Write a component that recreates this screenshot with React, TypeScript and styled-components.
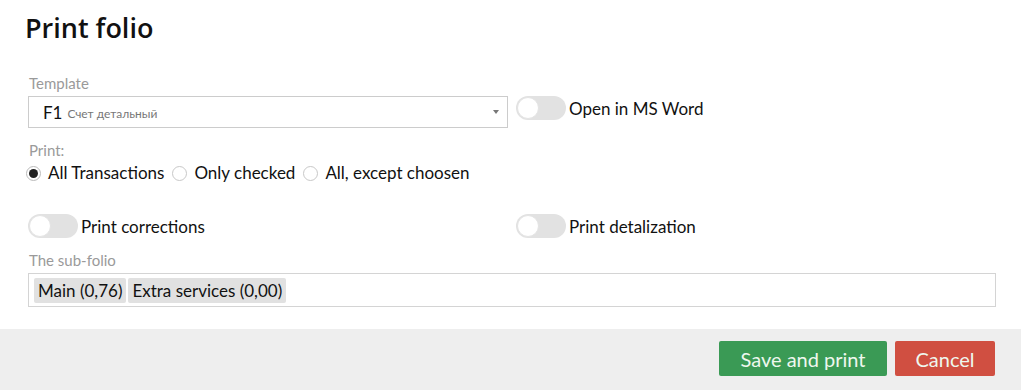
import React from "react";
import styled, { createGlobalStyle } from "styled-components";

const Global = createGlobalStyle`
  html, body { margin: 0; padding: 0; background: #fff; }
  body { font-family: "Lato", "Liberation Sans", sans-serif; color: #222; }
  * { box-sizing: border-box; }
`;

const Dialog = styled.div`
  width: 1021px;
  height: 390px;
  display: flex;
  flex-direction: column;
  background: #fff;
`;

const Body = styled.div`
  flex: 1;
  padding: 11px 25px 0 28px;
`;

const Title = styled.h1`
  margin: 0 0 0 -3px;
  font-family: "Open Sans", sans-serif;
  font-weight: 600;
  font-size: 27px;
  line-height: 34px;
  color: #111;
`;

const Grid = styled.div<{ $mt: number }>`
  display: grid;
  grid-template-columns: 480px 1fr;
  column-gap: 8px;
  margin-top: ${(p) => p.$mt}px;
`;

const Label = styled.div<{ $mt?: number }>`
  font-size: 15px;
  line-height: 18px;
  color: #9a9a9a;
  margin-top: ${(p) => p.$mt ?? 0}px;
  margin-bottom: 4px;
  padding-left: 1px;
`;

const Select = styled.div`
  height: 32px;
  border: 1px solid #ccc;
  display: flex;
  align-items: center;
  padding: 0 8px 0 14px;
  gap: 5px;
`;

const SelectCode = styled.span`
  font-size: 17px;
  color: #111;
`;

const SelectName = styled.span`
  flex: 1;
  font-size: 12px;
  color: #777;
  padding-top: 2px;
`;

const Caret = styled.span`
  width: 0;
  height: 0;
  border-left: 3.5px solid transparent;
  border-right: 3.5px solid transparent;
  border-top: 4px solid #777;
`;

const SwitchRow = styled.label<{ $pt?: number }>`
  display: flex;
  align-items: center;
  gap: 3px;
  font-size: 17px;
  line-height: 20px;
  color: #111;
  padding-top: ${(p) => p.$pt ?? 0}px;
  height: fit-content;
`;

const SwitchText = styled.span`
  padding-top: 2px;
`;

const Track = styled.span`
  width: 50px;
  height: 24px;
  border-radius: 12px;
  background: #e2e2e2;
  display: flex;
  align-items: center;
  padding: 1px;
`;

const Knob = styled.span`
  width: 22px;
  height: 22px;
  border-radius: 50%;
  background: #fff;
  border: 1px solid #e4e4e4;
`;

const RadioGroup = styled.div`
  display: flex;
  align-items: center;
  gap: 8px;
  margin-left: -2px;
  font-size: 17px;
  line-height: 20px;
  color: #111;
`;

const RadioItem = styled.label`
  display: flex;
  align-items: center;
  gap: 7px;
`;

const RadioCircle = styled.span<{ $checked?: boolean }>`
  width: 15px;
  height: 15px;
  border-radius: 50%;
  border: 1px solid ${(p) => (p.$checked ? "#bbb" : "#c8c8c8")};
  background: #fff;
  display: flex;
  align-items: center;
  justify-content: center;
  &::after {
    content: "";
    width: 9px;
    height: 9px;
    border-radius: 50%;
    background: ${(p) => (p.$checked ? "#222" : "transparent")};
  }
`;

const TagBox = styled.div`
  height: 34px;
  border: 1px solid #d4d4d4;
  display: flex;
  align-items: center;
  gap: 2px;
  padding: 0 5px;
`;

const Tag = styled.span`
  height: 25px;
  display: flex;
  align-items: center;
  padding: 0 4px;
  background: #e1e1e1;
  border-radius: 2px;
  font-size: 17px;
  color: #111;
`;

const Footer = styled.div`
  height: 61px;
  background: #eeeeee;
  display: flex;
  justify-content: flex-end;
  align-items: flex-start;
  gap: 8px;
  padding: 12px 26px 0 0;
`;

const Button = styled.button<{ $tone: "green" | "red" }>`
  height: 35px;
  border: none;
  border-radius: 2px;
  font-family: "Lato", sans-serif;
  font-size: 20px;
  color: #eef7ee;
  padding: 0 20px;
  min-width: ${(p) => (p.$tone === "green" ? 168 : 100)}px;
  background: ${(p) => (p.$tone === "green" ? "#3a9a55" : "#d04f41")};
  cursor: pointer;
`;

const Switch = ({ label, pt }: { label: string; pt?: number }) => (
  <SwitchRow $pt={pt}>
    <Track>
      <Knob />
    </Track>
    <SwitchText>{label}</SwitchText>
  </SwitchRow>
);

export default function App() {
  return (
    <>
      <Global />
      <Dialog>
        <Body>
          <Title>Print folio</Title>
          <Grid $mt={29}>
            <div>
              <Label>Template</Label>
              <Select>
                <SelectCode>F1</SelectCode>
                <SelectName>Счет детальный</SelectName>
                <Caret />
              </Select>
            </div>
            <Switch label="Open in MS Word" pt={22} />
          </Grid>
          <Label $mt={13}>Print:</Label>
          <RadioGroup>
            <RadioItem>
              <RadioCircle $checked />
              All Transactions
            </RadioItem>
            <RadioItem>
              <RadioCircle />
              Only checked
            </RadioItem>
            <RadioItem>
              <RadioCircle />
              All, except choosen
            </RadioItem>
          </RadioGroup>
          <Grid $mt={31}>
            <Switch label="Print corrections" />
            <Switch label="Print detalization" />
          </Grid>
          <Label $mt={13}>The sub-folio</Label>
          <TagBox>
            <Tag>Main (0,76)</Tag>
            <Tag>Extra services (0,00)</Tag>
          </TagBox>
        </Body>
        <Footer>
          <Button $tone="green">Save and print</Button>
          <Button $tone="red">Cancel</Button>
        </Footer>
      </Dialog>
    </>
  );
}
